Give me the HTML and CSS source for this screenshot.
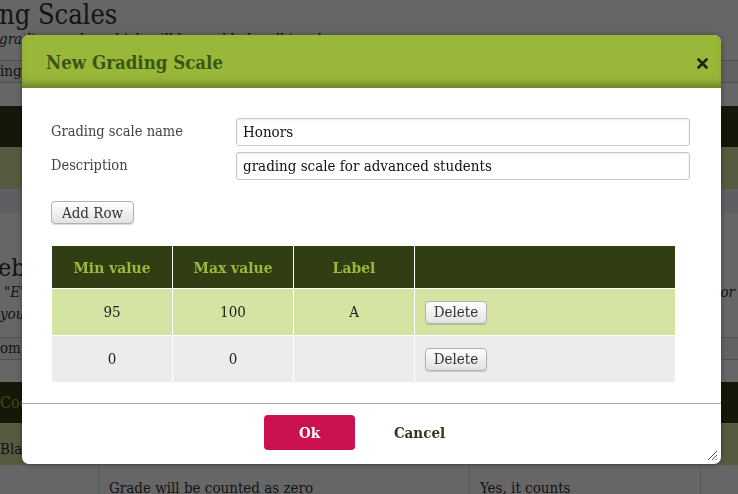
FILE: index.html
```html
<!DOCTYPE html>
<html>
<head>
<meta charset="utf-8">
<link rel="stylesheet" href="styles.css">
</head>
<body>
<div class="page">
  <div class="page-title">ng Scales</div>
  <div class="page-sub">grading scales which will be usable by all teachers</div>
  <div class="page-bar"><span>ing</span></div>
  <div class="band band-dark"></div>
  <div class="band band-olive"></div>
  <div class="band band-pale"></div>
  <div class="section2">
    <div class="page-h2">ebo</div>
    <div class="page-note"><span>"E"</span><span>or</span></div>
    <div class="page-note">you</div>
    <div class="page-bar page-bar2"><span>om</span></div>
  </div>
  <div class="band band-dark band-text">Coo</div>
  <div class="band band-olive band-text2">Blan</div>
  <div class="page-row">
    <div class="c1"></div>
    <div class="c2">Grade will be counted as zero</div>
    <div class="c3">Yes, it counts</div>
    <div class="c4"></div>
  </div>
</div>

<div class="overlay"></div>

<div class="dialog">
  <div class="dlg-head">
    <div class="dlg-title">New Grading Scale</div>
    <svg class="dlg-close" width="11" height="11" viewBox="0 0 11 11"><path d="M1.5 1.5 L9.5 9.5 M9.5 1.5 L1.5 9.5" stroke="#1f2412" stroke-width="2.6" stroke-linecap="round"/></svg>
  </div>
  <div class="dlg-body">
    <div class="field">
      <label class="field-label">Grading scale name</label>
      <div class="field-input">Honors</div>
    </div>
    <div class="field">
      <label class="field-label">Description</label>
      <div class="field-input">grading scale for advanced students</div>
    </div>
    <div class="add-row"><button class="btn btn-add">Add Row</button></div>
    <table class="scale">
      <thead>
        <tr><th class="w1">Min value</th><th class="w1">Max value</th><th class="w1">Label</th><th></th></tr>
      </thead>
      <tbody>
        <tr class="r1"><td>95</td><td>100</td><td>A</td><td class="act"><button class="btn btn-del">Delete</button></td></tr>
        <tr class="r2"><td>0</td><td>0</td><td></td><td class="act"><button class="btn btn-del">Delete</button></td></tr>
      </tbody>
    </table>
  </div>
  <div class="dlg-foot">
    <button class="btn-ok">Ok</button>
    <button class="btn-cancel">Cancel</button>
    <svg class="grip" width="12" height="12" viewBox="0 0 12 12"><path d="M11 2 L2 11 M11 6 L6 11 M11 9.5 L9.5 11" stroke="#555" stroke-width="1"/></svg>
  </div>
</div>
</body>
</html>
```

FILE: styles.css
```css
html, body {
  margin: 0;
  padding: 0;
  background: #fff;
  overflow: hidden;
}
body {
  font-family: "DejaVu Serif Condensed", "DejaVu Serif", serif;
  font-stretch: condensed;
  color: #333;
  width: 738px;
  height: 494px;
}
.page {
  width: 738px;
}
.page-title {
  font-size: 27px;
  line-height: 30px;
  height: 30px;
  color: #333;
  margin-left: -1px;
}
.page-sub {
  font-size: 15px;
  font-style: italic;
  line-height: 18px;
  height: 30px;
  color: #333;
  margin-left: -1px;
}
.page-bar {
  height: 21px;
  border-top: 1px solid #c8c8c8;
  border-bottom: 1px solid #c8c8c8;
  background: #f6f6f6;
  font-size: 15px;
  line-height: 21px;
  margin-bottom: 23px;
}
.band { height: 42px; }
.band-dark { background: #323c16; height: 41px; }
.band-olive { background: #d7e2a0; }
.band-pale { background: #eeeef8; height: 24px; }
.section2 {
  height: 169px;
  padding-top: 42px;
  box-sizing: border-box;
}
.page-h2 {
  font-size: 25px;
  line-height: 26px;
  color: #333;
  margin-left: -2px;
}
.page-note {
  font-size: 15px;
  font-style: italic;
  line-height: 22px;
  display: flex;
  justify-content: space-between;
  padding-left: 4px;
  padding-right: 3px;
}
.page-note + .page-note { padding-left: 0; }
.page-bar2 { margin-top: 12px; }
.band-text {
  color: #9ab83a;
  font-size: 16px;
  line-height: 42px;
}
.band-text2 {
  font-size: 15px;
  line-height: 52px;
  height: 42px;
}
.page-row {
  display: flex;
  height: 40px;
  font-size: 15px;
}
.page-row > div {
  border-left: 1px solid #ddd;
  padding: 14px 10px 0;
  box-sizing: border-box;
  white-space: nowrap;
}
.page-row .c1 { border-left: none; width: 98px; }
.page-row .c2 { width: 371px; }
.page-row .c3 { width: 231px; }
.page-row .c4 { flex: 1; }

.overlay {
  position: fixed;
  inset: 0;
  background: rgba(0, 0, 0, 0.6);
}

.dialog {
  position: fixed;
  left: 22px;
  top: 35px;
  width: 699px;
  height: 429px;
  background: #fff;
  border-radius: 7px;
  display: flex;
  flex-direction: column;
  overflow: hidden;
  box-shadow: 0 0 6px rgba(0, 0, 0, 0.35);
}
.dlg-head {
  height: 53px;
  flex: none;
  background: #99b83a;
  box-shadow: inset 0 -9px 8px -5px rgba(40, 50, 10, 0.45);
  display: flex;
  align-items: center;
  justify-content: space-between;
  padding: 0 13px 0 24px;
}
.dlg-title {
  font-size: 18.5px;
  font-weight: bold;
  color: #3a5616;
  padding-top: 2px;
}
.dlg-close { margin-top: 3px; }
.dlg-body {
  flex: 1;
  padding: 30px 31px 0 29px;
  min-height: 0;
}
.field {
  display: flex;
  align-items: center;
  margin-bottom: 6px;
}
.field-label {
  width: 185px;
  font-size: 14.5px;
  color: #444;
  margin-top: -3px;
}
.field-input {
  flex: 1;
  height: 26px;
  border: 1px solid #c6c6c6;
  border-radius: 3px;
  box-shadow: inset 0 1px 2px rgba(0, 0, 0, 0.08);
  font-size: 15px;
  line-height: 27px;
  padding-left: 6px;
  color: #111;
}
.add-row { padding-top: 15px; height: 23px; }
.btn {
  font-family: inherit;
  font-stretch: condensed;
  font-size: 15px;
  color: #333;
  height: 23px;
  padding: 0;
  white-space: nowrap;
  border: 1px solid #b0b0b0;
  border-radius: 4px;
  background: linear-gradient(#ffffff, #e2e2e2);
  box-shadow: 0 1px 1px rgba(0, 0, 0, 0.15);
  display: block;
}
.btn-add { width: 83px; }
.scale {
  margin-top: 22px;
  margin-left: 1px;
  width: 623px;
  border-collapse: collapse;
  font-size: 15px;
}
.scale th, .scale td {
  border: 1px solid #fff;
  text-align: center;
  padding: 0;
}
.scale tr > :first-child { border-left: none; }
.scale tr > :last-child { border-right: none; }
.scale thead th { border-top: none; }
.scale tbody tr:last-child td { border-bottom: none; }
.scale th {
  background: #313d13;
  color: #9ab83a;
  font-weight: bold;
  height: 42px;
  font-size: 15.5px;
}
.scale .w1 { width: 120px; }
.scale td {
  height: 46px;
  color: #222;
}
.r1 td { background: #d5e4a3; }
.r2 td { background: #ececec; }
.scale td.act { text-align: left; padding-left: 10px; }
.btn-del { width: 62px; }
.dlg-foot {
  flex: none;
  box-sizing: border-box;
  height: 61px;
  border-top: 1px solid #ababab;
  display: flex;
  align-items: flex-start;
  padding: 11px 0 0 242px;
  position: relative;
}
.btn-ok {
  width: 91px;
  height: 35px;
  border: none;
  border-radius: 4px;
  background: #cc114f;
  color: #fff;
  font-family: inherit;
  font-stretch: condensed;
  font-weight: bold;
  font-size: 15px;
}
.btn-cancel {
  height: 35px;
  margin-left: 19px;
  width: 91px;
  border: none;
  background: none;
  color: #2f3818;
  font-family: inherit;
  font-stretch: condensed;
  font-weight: bold;
  font-size: 15px;
  padding: 0;
}
.grip {
  position: absolute;
  right: 3px;
  bottom: 3px;
}
```
